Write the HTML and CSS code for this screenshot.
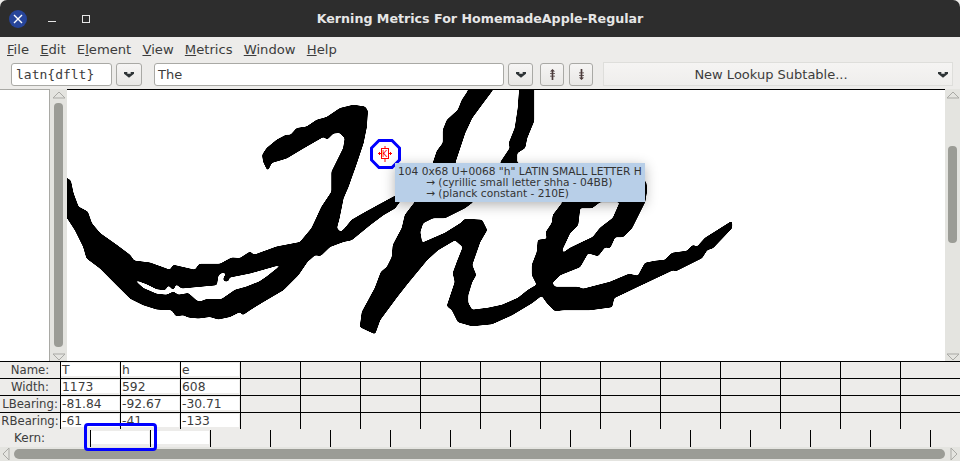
FILE: index.html
```html
<!DOCTYPE html>
<html lang="en">

<head>
    <meta charset="UTF-8">
    <title>Kerning Metrics For HomemadeApple-Regular</title>
    <link rel="stylesheet" href="styles.css">
</head>

<body>
    <div class="window">
        <header class="titlebar">
            <div class="controls">
                <span class="close"><svg width="10" height="10" viewBox="0 0 10 10"><path d="M1 1L9 9M9 1L1 9" stroke="#fff" stroke-width="1.4"/></svg></span>
                <span class="minimize"></span>
                <span class="maximize"></span>
            </div>
            <div class="title">Kerning Metrics For HomemadeApple-Regular</div>
            <div></div>
        </header>

        <nav class="menubar">
            <span><u>F</u>ile</span>
            <span><u>E</u>dit</span>
            <span>E<u>l</u>ement</span>
            <span><u>V</u>iew</span>
            <span><u>M</u>etrics</span>
            <span><u>W</u>indow</span>
            <span><u>H</u>elp</span>
        </nav>

        <div class="toolbar">
            <div class="field script-field">latn{dflt}</div>
            <button class="tool-btn"><svg width="10" height="7" viewBox="0 0 12 8"><path d="M0 1H4V3H8V1H12V3L6 8L0 3Z" fill="#2e3436"/></svg></button>
            <div class="field text-field">The</div>
            <button class="tool-btn"><svg width="10" height="7" viewBox="0 0 12 8"><path d="M0 1H4V3H8V1H12V3L6 8L0 3Z" fill="#2e3436"/></svg></button>
            <button class="tool-btn small up"><svg width="5" height="11" viewBox="0 0 6 13"><path d="M3 0L6 3H4V5H6V6H4V8H6V9H4V13H2V9H0V8H2V6H0V5H2V3H0Z" fill="#4a3a3a"/></svg></button>
            <button class="tool-btn small"><svg width="5" height="11" viewBox="0 0 6 13"><path d="M3 13L6 10H4V8H6V7H4V5H6V4H4V0H2V4H0V5H2V7H0V8H2V10H0Z" fill="#4a3a3a"/></svg></button>
            <div class="lookup">
                <span class="lookup-label">New Lookup Subtable...</span>
                <svg width="10" height="7" viewBox="0 0 12 8"><path d="M0 1H4V3H8V1H12V3L6 8L0 3Z" fill="#2e3436"/></svg>
            </div>
        </div>

        <main class="editor">
            <div class="side-panel"></div>
            <div class="vbar">
                <svg class="arrow" width="14" height="8" viewBox="0 0 14 8"><path d="M1 7L7 1L13 7Z" fill="none" stroke="#a9a9a5"/></svg>
                <div class="track"><div class="thumb left-thumb"></div></div>
                <svg class="arrow" width="14" height="8" viewBox="0 0 14 8"><path d="M1 1L7 7L13 1Z" fill="none" stroke="#a9a9a5"/></svg>
            </div>
            <div class="canvas">
                <svg class="glyphs" width="878" height="271" viewBox="67 90 878 271">
                    <defs>
                        <filter id="soften" x="-5%" y="-5%" width="110%" height="110%">
                            <feGaussianBlur stdDeviation="1"/>
                            <feComponentTransfer>
                                <feFuncA type="linear" slope="6" intercept="-1.900"/>
                            </feComponentTransfer>
                        </filter>
                    </defs>
                    <g filter="url(#soften)">
                        <!-- T -->
                        <g transform="translate(50 90) scale(.33333)">
                            <path fill-rule="evenodd" d="M637 195L650 175L680 150L708 135L722 135L740 115L770 110L800 90L830 82L870 55L910 45L945 50L953 62L950 110L940 160L920 220L895 290L880 325L875 350L868 385L860 415L872 427L885 415L905 390L940 370L985 345L1035 318L1060 320L1035 355L1000 375L960 405L905 450L880 455L840 470L812 497L795 495L772 515L745 555L700 600L640 635L600 660L578 675L570 665L540 680L505 688L480 680L445 685L415 682L400 675L378 678L365 660L320 658L280 645L245 628L240 625L200 585L150 535L110 505L100 470L75 420L52 385L20 340L20 262L52 265L62 272L70 310L85 350L113 365L125 400L150 430L200 465L240 495L252 512L300 518L360 540L370 525L435 540L448 522L510 522L545 503L570 505L600 485L612 495L680 470L750 457L785 415L815 350L845 305L845 245L880 175L885 145L870 128L850 130L832 148L820 140L760 175L710 205L665 218L653 242L640 215Z
                            M248 566L290 582L320 597L345 600L355 585L370 600L378 582L395 595L500 585L505 555L518 547L528 550L520 572L540 562L600 550L698 522L650 560L628 575L590 590L555 600L515 628L470 628L450 635L440 632L415 610L385 615L370 605L350 615L320 612L280 595Z"/>
                            <circle cx="529" cy="566" r="8"/>
                        </g>
                        <!-- h -->
                        <path d="M470 80L498 80L492 91L483 103L472 118L465 133L455 163L470 185L473 202L465 208L455 213L445 218L433 218L423 223L420 232L422 243L445 233L461 223L465 219L482 220L487 230L480 242L472 265L476 275L472 282L468 295L468 303L472 310L488 308L502 305L518 298L528 290L545 280L545 293L532 303L512 315L492 324L472 326L458 322L452 310L447 306L455 282L453 273L457 262L463 247L455 240L438 250L427 260L408 283L397 297L380 320L375 334L360 327L362 312L375 288L381 272L387 267L392 257L393 245L402 228L405 215L415 202L433 163L437 151L443 143L443 130L447 120L458 110L462 100L468 91Z"/>
                        <!-- e -->
                        <path d="M520 80L534 80L534 121L527 138L525 148L517 153L517 163L600 175L640 178L646 182L647 190L645 202L632 228L623 237L615 237L610 248L605 247L598 256L588 253L580 267L560 275L552 283L555 287L578 287L583 289L610 282L629 274L638 276L645 263L655 261L665 260L672 253L687 251L693 245L697 247L705 238L713 233L732 221L732 228L713 248L707 250L702 258L676 271L673 270L637 287L614 298L612 307L590 310L563 310L555 311L547 303L540 293L537 285L532 275L532 265L537 252L538 240L547 239L546 232L552 223L553 215L563 202L500 163L510 148L509 143L515 128L518 108Z
                        M620 202L613 218L600 228L593 237L570 248L563 253L562 250L570 233L578 225L580 208L592 208L600 202Z" fill-rule="evenodd"/>
                    </g>
                    <!-- kerning marker -->
                    <path d="M379 140.500H392L399.500 148V160L392 167.500H379L371.500 160V148Z" fill="none" stroke="#0000ff" stroke-width="3"/>
                    <g fill="none" stroke="#f00" stroke-width="1">
                        <rect x="381.500" y="148.500" width="7" height="10"/>
                        <path d="M378 153.500H381M389 153.500H392M385 146V148M385 159V162M379.500 152V155M390.500 152V155"/>
                    </g>
                    <text class="marker-letter" x="382" y="157">K</text>
                </svg>
                <div class="tooltip">
                    <div>104 0x68 U+0068 "h" LATIN SMALL LETTER H</div>
                    <div class="alt">→ (cyrillic small letter shha - 04BB)</div>
                    <div class="alt">→ (planck constant - 210E)</div>
                </div>
            </div>
            <div class="vbar">
                <svg class="arrow" width="14" height="8" viewBox="0 0 14 8"><path d="M1 7L7 1L13 7Z" fill="none" stroke="#a9a9a5"/></svg>
                <div class="track"><div class="thumb right-thumb"></div></div>
                <svg class="arrow" width="14" height="8" viewBox="0 0 14 8"><path d="M1 1L7 7L13 1Z" fill="none" stroke="#a9a9a5"/></svg>
            </div>
        </main>

        <section class="metrics">
            <div class="row">
                <div class="cell label">Name:</div>
                <div class="cell"><div class="value">T</div></div>
                <div class="cell"><div class="value">h</div></div>
                <div class="cell"><div class="value">e</div></div>
                <div class="cell"></div><div class="cell"></div><div class="cell"></div><div class="cell"></div>
                <div class="cell"></div><div class="cell"></div><div class="cell"></div><div class="cell"></div>
                <div class="cell"></div><div class="cell"></div><div class="cell"></div><div class="cell"></div>
            </div>
            <div class="row">
                <div class="cell label">Width:</div>
                <div class="cell"><div class="value">1173</div></div>
                <div class="cell"><div class="value">592</div></div>
                <div class="cell"><div class="value">608</div></div>
                <div class="cell"></div><div class="cell"></div><div class="cell"></div><div class="cell"></div>
                <div class="cell"></div><div class="cell"></div><div class="cell"></div><div class="cell"></div>
                <div class="cell"></div><div class="cell"></div><div class="cell"></div><div class="cell"></div>
            </div>
            <div class="row">
                <div class="cell label">LBearing:</div>
                <div class="cell"><div class="value">-81.84</div></div>
                <div class="cell"><div class="value">-92.67</div></div>
                <div class="cell"><div class="value">-30.71</div></div>
                <div class="cell"></div><div class="cell"></div><div class="cell"></div><div class="cell"></div>
                <div class="cell"></div><div class="cell"></div><div class="cell"></div><div class="cell"></div>
                <div class="cell"></div><div class="cell"></div><div class="cell"></div><div class="cell"></div>
            </div>
            <div class="row">
                <div class="cell label">RBearing:</div>
                <div class="cell"><div class="value">-61</div></div>
                <div class="cell"><div class="value">-41</div></div>
                <div class="cell"><div class="value">-133</div></div>
                <div class="cell"></div><div class="cell"></div><div class="cell"></div><div class="cell"></div>
                <div class="cell"></div><div class="cell"></div><div class="cell"></div><div class="cell"></div>
                <div class="cell"></div><div class="cell"></div><div class="cell"></div><div class="cell"></div>
            </div>
            <div class="row kern-row">
                <div class="kern-label">Kern:</div>
                <div class="cell kern"><div class="value"></div></div>
                <div class="cell kern"><div class="value"></div></div>
                <div class="cell kern"></div><div class="cell kern"></div><div class="cell kern"></div><div class="cell kern"></div><div class="cell kern"></div>
                <div class="cell kern"></div><div class="cell kern"></div><div class="cell kern"></div><div class="cell kern"></div><div class="cell kern"></div>
                <div class="cell kern"></div><div class="cell kern"></div><div class="cell kern"></div>
            </div>
            <div class="kern-box"></div>
        </section>

        <div class="hbar">
            <svg width="8" height="14" viewBox="0 0 8 14"><path d="M7 1L1 7L7 13Z" fill="none" stroke="#a9a9a5"/></svg>
            <div class="hthumb"></div>
            <svg width="8" height="14" viewBox="0 0 8 14"><path d="M1 1L7 7L1 13Z" fill="none" stroke="#a9a9a5"/></svg>
        </div>
    </div>
</body>

</html>
```

FILE: styles.css
```css
body {
    margin: 0;
    background: #fff;
    font-family: "DejaVu Sans", sans-serif;
    color: #3c3c3c;
    overflow: hidden;
}

.window {
    width: 960px;
    height: 461px;
    display: flex;
    flex-direction: column;
    background: #edecea;
    overflow: hidden;
}

.titlebar {
    height: 37px;
    flex: none;
    display: grid;
    grid-template-columns: 1fr auto 1fr;
    align-items: center;
    background: #2d2d2d;
    border-radius: 7px 7px 0 0;
}

.title {
    color: #e6e6e6;
    font-size: 12.650px;
    font-weight: bold;
}

.controls {
    display: flex;
    align-items: center;
    padding-left: 9px;
}

.close {
    width: 18px;
    height: 18px;
    border-radius: 50%;
    background: #27459a;
    display: flex;
    align-items: center;
    justify-content: center;
}

.minimize {
    width: 8px;
    height: 1px;
    background: #e6e6e6;
    margin: 6px 0 0 21px;
}

.maximize {
    width: 6px;
    height: 6px;
    border: 1px solid #e6e6e6;
    margin-left: 26px;
}

.menubar {
    height: 25px;
    flex: none;
    display: flex;
    align-items: center;
    gap: 11.200px;
    padding-left: 7px;
    font-size: 13.150px;
}

.toolbar {
    height: 27px;
    flex: none;
    display: flex;
    align-items: flex-start;
    padding-left: 11px;
}

.field {
    height: 23px;
    box-sizing: border-box;
    margin-top: 1px;
    padding-left: 4px;
    line-height: 21px;
    background: #fff;
    border: 1px solid #a9a9a5;
    border-radius: 3px;
    font-size: 13px;
}

.script-field {
    width: 101px;
    font-family: "DejaVu Sans Mono", monospace;
}

.text-field {
    width: 350px;
    margin-left: 12px;
    padding-left: 3px;
}

.tool-btn {
    width: 26px;
    height: 23px;
    margin: 1px 0 0 4px;
    padding: 0;
    display: flex;
    align-items: center;
    justify-content: center;
    background: linear-gradient(#f6f5f4, #e8e7e5);
    border: 1px solid #a9a9a5;
    border-radius: 3px;
}

.text-field + .tool-btn {
    width: 25px;
    margin-left: 4px;
}

.tool-btn.small {
    width: 24px;
    margin-left: 5px;
}

.tool-btn.up {
    margin-left: 7px;
}

.lookup {
    width: 350px;
    height: 24px;
    box-sizing: border-box;
    margin-left: 10px;
    padding: 0 4px 0 0;
    display: flex;
    align-items: center;
    background: linear-gradient(#f5f4f3, #efeeec);
    border: 1px solid #dededb;
    font-size: 13px;
}

.lookup-label {
    flex: 1;
    text-align: center;
}

.editor {
    height: 272px;
    flex: none;
    display: flex;
    position: relative;
}

.side-panel {
    width: 50px;
    box-sizing: border-box;
    background: #fff;
    border-top: 1px solid #a9a9a5;
    border-right: 1px solid #a9a9a5;
}

.vbar {
    width: 15px;
    display: flex;
    flex-direction: column;
    align-items: center;
    padding-top: 2px;
    box-sizing: border-box;
    background: #e4e4e0;
}

.editor > .vbar:nth-child(2) {
    width: 17px;
}

.arrow {
    flex: none;
}

.track {
    flex: 1;
    width: 9px;
    padding: 4px 0;
}

.thumb {
    width: 9px;
    background: #9b9c96;
    border-radius: 4px;
}

.left-thumb {
    height: 244px;
}

.right-thumb {
    height: 97px;
    margin-top: 43px;
}

.canvas {
    flex: 1;
    position: relative;
    background: #fff;
    border-top: 1px solid #000;
}

.glyphs {
    display: block;
}

.marker-letter {
    font-family: "DejaVu Sans", sans-serif;
    font-size: 8px;
    fill: #f00;
}

.tooltip {
    position: absolute;
    left: 328px;
    top: 73px;
    width: 250px;
    height: 39px;
    box-sizing: border-box;
    padding: 3px 0 0 3px;
    background: #b8cfe8;
    box-shadow: 0 3px 12px rgba(0, 0, 0, 0.3);
    font-size: 10.650px;
    line-height: 11px;
    white-space: nowrap;
    color: #333;
}

.tooltip .alt {
    padding-left: 28px;
}

.metrics {
    position: relative;
    flex: none;
    height: 86px;
}

.row {
    height: 17px;
    display: flex;
}

.kern-row {
    height: 18px;
}

.cell {
    width: 60px;
    flex: none;
    box-sizing: border-box;
    border-top: 1px solid #000;
    border-left: 1px solid #000;
    font-size: 12.300px;
    line-height: 15px;
}

.cell.label {
    border-left: 0;
    text-align: center;
    font-size: 11.700px;
    line-height: 17px;
    white-space: nowrap;
}

.value {
    height: 13px;
    margin: 1px 1px 0 0;
    padding-left: 1px;
    background: #fff;
    line-height: 15px;
    overflow: visible;
}

.kern-label {
    width: 90px;
    flex: none;
    box-sizing: border-box;
    padding-left: 14px;
    font-size: 12px;
    line-height: 16px;
    margin-top: 1px;
}

.cell.kern {
    border-top: 0;
    margin-top: 1px;
}

.kern-box {
    position: absolute;
    left: 84px;
    top: 62px;
    width: 73px;
    height: 28px;
    box-sizing: border-box;
    border: 3px solid #0000ff;
    border-radius: 4px;
}

.hbar {
    flex: 1;
    display: flex;
    align-items: center;
    padding: 0 2px;
    background: #e4e4e0;
}

.hthumb {
    width: 932px;
    height: 10px;
    margin: 0 5px 0 4px;
    background: #9b9c96;
    border-radius: 5px;
}
```
